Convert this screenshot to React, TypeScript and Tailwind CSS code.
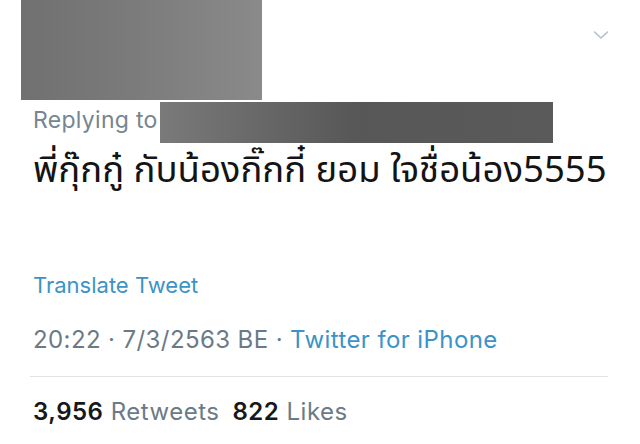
import React from "react";

export default function App() {
  const latin = { fontFamily: "Inter, Roboto, 'Liberation Sans', sans-serif" };
  return (
    <div className="w-[640px] h-[444px] bg-white overflow-hidden" style={latin}>
      {/* top row */}
      <div className="flex h-[100px] justify-between">
        <div className="ml-[21px] w-[241px] h-full bg-gradient-to-r from-[#707070] via-[#7c7c7c] to-[#8a8a8a]" />
        <svg className="mt-[30px] mr-[31px]" width="16" height="10" viewBox="0 0 16 10" fill="none">
          <path d="M1.5 2 L8 8 L14.5 2" stroke="#b4bcc3" strokeWidth="1.5" strokeLinecap="round" strokeLinejoin="round" />
        </svg>
      </div>
      {/* replying row */}
      <div className="mt-[2px] flex h-[41px]">
        <div className="ml-[33px] w-[127px] pt-[7px] text-[23px] leading-[23px] tracking-[0.3px] text-[#76858f] whitespace-nowrap overflow-hidden">
          Replying to
        </div>
        <div className="w-[393px] h-full bg-gradient-to-r from-[#7a7a7a] via-[#575757] to-[#5a5a5a]" />
      </div>
      {/* tweet text */}
      <div
        className="ml-[33px] mt-[1px] text-[36.5px] leading-[54px] text-[#141414] whitespace-nowrap"
        style={{ fontFamily: "'Noto Sans Thai', 'Noto Sans Thai UI', Loma, Garuda, Kinnari, 'Noto Sans', sans-serif" }}
      >
        พี่กุ๊กกู๋ กับน้องกิ๊กกี๋ ยอม ใจชื่อน้อง5555
      </div>
      {/* translate */}
      <div className="ml-[33px] mt-[75px] text-[22px] leading-[24px] text-[#3b93c6]">Translate Tweet</div>
      {/* timestamp */}
      <div className="ml-[33px] mt-[29px] text-[24px] leading-[28px] tracking-[0.4px] text-[#6b7a85] whitespace-nowrap">
        20:22 · 7/3/2563 BE · <span className="text-[#3b93c6]">Twitter for iPhone</span>
      </div>
      {/* divider */}
      <div className="ml-[30px] mt-[22px] w-[578px] h-px bg-[#dfe3e6]" />
      {/* counts */}
      <div className="ml-[33px] mt-[21px] text-[24px] leading-[28px] tracking-[0.5px] whitespace-nowrap">
        <span className="font-semibold text-[#16181a]">3,956</span>
        <span className="text-[#6b7a85]"> Retweets</span>
        <span className="font-semibold text-[#16181a] ml-[13px]">822</span>
        <span className="text-[#6b7a85]"> Likes</span>
      </div>
    </div>
  );
}
